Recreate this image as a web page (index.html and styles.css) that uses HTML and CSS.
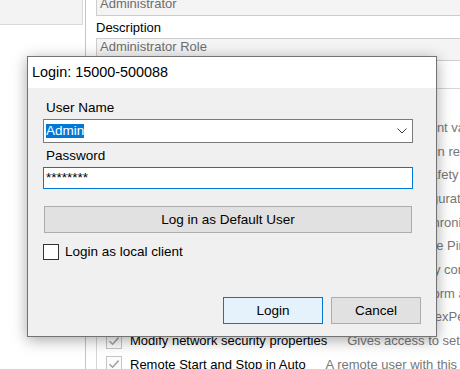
FILE: index.html
```html
<!DOCTYPE html>
<html>
<head>
<meta charset="utf-8">
<link rel="stylesheet" href="styles.css">
</head>
<body>
<div class="app">
  <aside class="left"><div class="pane"></div></aside>
  <div class="split"></div>
  <main class="content">
    <div class="field top">Administrator</div>
    <div class="label">Description</div>
    <div class="field role">Administrator Role</div>
    <div class="grants">
      <div class="row"><span class="cb"><svg viewBox="0 0 14 14"><path d="M2.5 7.2 L5.6 10.2 L11.6 3.6"/></svg></span><span class="name">Modify current value</span><span class="desc">Allows to change all the current values of RAPID variables</span></div>
      <div class="row"><span class="cb"><svg viewBox="0 0 14 14"><path d="M2.5 7.2 L5.6 10.2 L11.6 3.6"/></svg></span><span class="name">Revolution counter update</span><span class="desc">Gives user access to run revolution counter update</span></div>
      <div class="row"><span class="cb"><svg viewBox="0 0 14 14"><path d="M2.5 7.2 L5.6 10.2 L11.6 3.6"/></svg></span><span class="name">Safety controller configuration</span><span class="desc">Allows to change safety settings</span></div>
      <div class="row"><span class="cb"><svg viewBox="0 0 14 14"><path d="M2.5 7.2 L5.6 10.2 L11.6 3.6"/></svg></span><span class="name">Modify configuration</span><span class="desc">Gives access to modify configuration parameters</span></div>
      <div class="row"><span class="cb"><svg viewBox="0 0 14 14"><path d="M2.5 7.2 L5.6 10.2 L11.6 3.6"/></svg></span><span class="name">Clock synchronization</span><span class="desc">Allows the operator to synchronize the clock</span></div>
      <div class="row"><span class="cb"><svg viewBox="0 0 14 14"><path d="M2.5 7.2 L5.6 10.2 L11.6 3.6"/></svg></span><span class="name">Change Pin code</span><span class="desc">Allows the operator to change the Pin code</span></div>
      <div class="row"><span class="cb"><svg viewBox="0 0 14 14"><path d="M2.5 7.2 L5.6 10.2 L11.6 3.6"/></svg></span><span class="name">Modify controller properties</span><span class="desc">Allows a user to modify controller properties</span></div>
      <div class="row"><span class="cb"><svg viewBox="0 0 14 14"><path d="M2.5 7.2 L5.6 10.2 L11.6 3.6"/></svg></span><span class="name">Perform ModPos and HotEdit</span><span class="desc">Allows users to perform a position modification</span></div>
      <div class="row"><span class="cb"><svg viewBox="0 0 14 14"><path d="M2.5 7.2 L5.6 10.2 L11.6 3.6"/></svg></span><span class="name">FlexPendant login</span><span class="desc">Allows the user to log in on a FlexPendant</span></div>
      <div class="row"><span class="cb"><svg viewBox="0 0 14 14"><path d="M2.5 7.2 L5.6 10.2 L11.6 3.6"/></svg></span><span class="name">Modify network security properties</span><span class="desc">Gives access to set network security properties</span></div>
      <div class="row"><span class="cb"><svg viewBox="0 0 14 14"><path d="M2.5 7.2 L5.6 10.2 L11.6 3.6"/></svg></span><span class="name">Remote Start and Stop in Auto</span><span class="desc">A remote user with this grant can start and stop in Auto</span></div>
    </div>
  </main>
</div>

<div class="dialog">
  <div class="titlebar">Login: 15000-500088</div>
  <div class="dbody">
    <div class="dlabel">User Name</div>
    <div class="combo"><span class="sel">Admin</span><svg class="chev" viewBox="0 0 10 6" width="10" height="6"><polyline points="0.5,0.5 5,5 9.5,0.5"/></svg></div>
    <div class="dlabel pw">Password</div>
    <div class="pwbox">********</div>
    <div class="btn wide">Log in as Default User</div>
    <div class="check"><span class="box"></span><span>Login as local client</span></div>
    <div class="actions">
      <div class="btn primary">Login</div>
      <div class="btn cancel">Cancel</div>
    </div>
  </div>
</div>
</body>
</html>
```
FILE: styles.css
```css
html, body {
  margin: 0;
  padding: 0;
}
body {
  width: 460px;
  height: 369px;
  overflow: hidden;
  position: relative;
  background: #ffffff;
  font-family: "Liberation Sans", Arial, sans-serif;
  font-size: 13px;
  color: #000;
}
.app {
  display: flex;
  height: 369px;
}
.left {
  width: 85px;
  flex: none;
}
.pane {
  width: 83px;
  height: 25px;
  box-sizing: border-box;
  background: #f3f3f3;
  border-right: 1px solid #dadada;
  border-bottom: 1px solid #dadada;
}
.split {
  width: 1px;
  flex: none;
  background: #c4c4c4;
}
.content {
  flex: 1;
  min-width: 0;
  overflow: hidden;
  padding-left: 10px;
}
.field {
  box-sizing: border-box;
  height: 21px;
  border: 1px solid #cdcdcd;
  background: #f4f4f4;
  color: #6d6d6d;
  padding: 0 3px;
  line-height: 16px;
  margin-right: -30px;
  white-space: nowrap;
}
.field.top {
  margin-top: -5px;
}
.field.role {
  height: 23px;
  margin-top: 2px;
}
.label {
  margin-top: 4px;
  line-height: 16px;
}
.grants {
  margin-top: 27px;
  border-top: 1px solid #d6d6d6;
  border-left: 1px solid #d6d6d6;
  padding-top: 26.5px;
}
.row {
  display: flex;
  align-items: center;
  height: 23.7px;
  white-space: nowrap;
}
.cb {
  flex: none;
  width: 16px;
  height: 16px;
  box-sizing: border-box;
  border: 1px solid #c4c4c4;
  background: #fcfcfc;
  margin: 0 8px 0 9px;
  display: flex;
}
.cb svg {
  width: 14px;
  height: 14px;
}
.cb path {
  fill: none;
  stroke: #a3a3a3;
  stroke-width: 1.6;
}
.name {
  color: #000;
}
.desc {
  color: #777777;
  margin-left: 20px;
}

/* dialog */
.dialog {
  position: absolute;
  left: 27px;
  top: 56px;
  width: 410px;
  height: 281px;
  box-sizing: border-box;
  border: 1px solid #737373;
  background: #f0f0f0;
  box-shadow: 0 3px 14px rgba(0, 0, 0, 0.35);
  display: flex;
  flex-direction: column;
  font-size: 13.5px;
}
.titlebar {
  height: 31px;
  flex: none;
  background: #ffffff;
  line-height: 31px;
  padding-left: 4px;
  font-size: 14.4px;
  color: #000;
}
.dbody {
  flex: 1;
  display: flex;
  flex-direction: column;
  padding: 12px 15px 12px 15px;
}
.dlabel {
  line-height: 16px;
  padding-left: 3px;
}
.dlabel.pw {
  margin-top: 5px;
}
.combo {
  margin: 3px 8px 0 0;
  height: 24px;
  box-sizing: border-box;
  border: 1px solid #7a7a7a;
  background: #fff;
  display: flex;
  align-items: center;
  padding-left: 2px;
}
.sel {
  background: #0078d7;
  color: #fff;
  line-height: 14px;
}
.chev {
  margin-left: auto;
  margin-right: 5px;
}
.chev polyline {
  fill: none;
  stroke: #3c3c3c;
  stroke-width: 1;
}
.pwbox {
  margin: 3px 8px 0 0;
  height: 22px;
  box-sizing: border-box;
  border: 1px solid #0078d7;
  background: #fff;
  line-height: 20px;
  padding-left: 2px;
}
.btn {
  box-sizing: border-box;
  height: 27px;
  border: 1px solid #adadad;
  background: #e1e1e1;
  display: flex;
  align-items: center;
  justify-content: center;
  color: #000;
}
.btn.wide {
  margin: 17px 9px 0 1px;
}
.check {
  margin-top: 10px;
  display: flex;
  align-items: center;
  height: 17px;
}
.box {
  width: 16px;
  height: 16px;
  box-sizing: border-box;
  border: 1px solid #333;
  background: #fff;
  margin-right: 6px;
  flex: none;
}
.actions {
  margin-top: auto;
  display: flex;
  justify-content: flex-end;
  gap: 8px;
}
.btn.primary {
  width: 100px;
  background: #e5f1fb;
  border-color: #0078d7;
}
.btn.cancel {
  width: 90px;
}
```
